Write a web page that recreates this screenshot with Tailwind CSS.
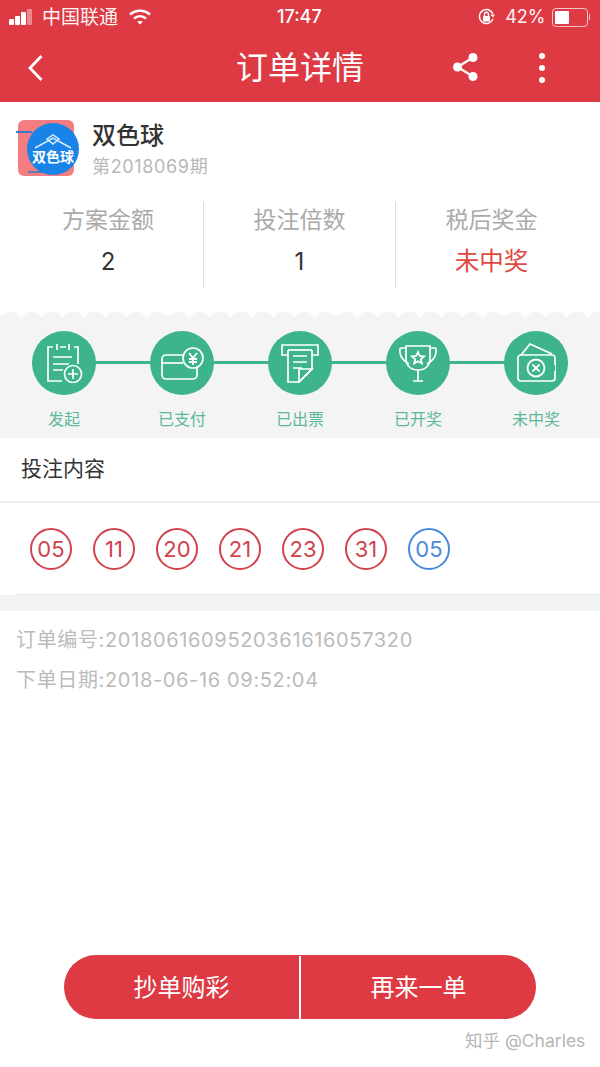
<!DOCTYPE html>
<html lang="zh-CN">
<head>
<meta charset="utf-8">
<script src="https://cdn.jsdelivr.net/npm/@tailwindcss/browser@4"></script>
</head>
<body class="m-0 bg-white">
<div class="relative flex h-[1067px] w-[600px] flex-col overflow-hidden bg-white font-['Inter','Noto_Sans_CJK_SC',sans-serif]">
  <!-- status bar + nav -->
  <header class="h-[102px] shrink-0 bg-[#dd3a44] text-white">
    <div class="flex h-[34px] items-center justify-between pl-[9px] pr-[10px]">
      <div class="flex items-center">
        <div class="flex items-end gap-[1px]">
          <span class="h-[6px] w-[5px] rounded-[1px] bg-white"></span>
          <span class="h-[9px] w-[5px] rounded-[1px] bg-white"></span>
          <span class="h-[13px] w-[5px] rounded-[1px] bg-white"></span>
          <span class="h-[16px] w-[5px] rounded-[1px] bg-white/40"></span>
        </div>
        <span class="ml-[10px] text-[19px] leading-none font-normal opacity-95">中国联通</span>
        <svg class="ml-[10px]" width="24" height="18" viewBox="0 0 24 18" fill="none" stroke="white" stroke-width="2.600"><path d="M2 6.500c6-5 14-5 20 0"/><path d="M6 10.500c3.600-3 8.400-3 12 0"/><path d="M12 16.500l-2.800-2.700c1.700-1.200 3.900-1.200 5.600 0z" fill="white" stroke="none"/></svg>
      </div>
      <span class="absolute left-[277px] text-[18px] font-medium leading-none">17:47</span>
      <div class="flex items-center">
        <svg width="19" height="18" viewBox="0 0 18 18" fill="none" stroke="white" stroke-width="1.400"><path d="M15.500 11A7 7 0 1 1 15.500 6"/><path d="M16.800 6.500l-1.300 2-1.800-2" stroke-width="1.200"/><rect x="5.500" y="8" width="7" height="5.500" fill="white" stroke="none" rx="0.800"/><path d="M7 8V6.300a2 2 0 0 1 4 0V8"/></svg>
        <span class="ml-[9px] text-[18px] leading-none opacity-95">42%</span>
        <div class="ml-[6px] flex h-[19px] w-[36px] items-center rounded-[4px] border border-white/70 p-[2px]">
          <span class="h-[13px] w-[14px] rounded-[1px] bg-white"></span>
        </div>
        <span class="ml-[1px] h-[6px] w-[1.500px] bg-white/70"></span>
      </div>
    </div>
    <div class="relative flex h-[68px] items-center justify-center">
      <svg class="absolute left-[26px] top-[20px]" width="20" height="28" viewBox="0 0 20 28" fill="none" stroke="white" stroke-width="2.800"><path d="M15.500 2 4 14l11.500 12"/></svg>
      <h1 class="text-[32px] leading-none font-normal">订单详情</h1>
      <svg class="absolute left-[452px] top-[17px]" width="28" height="32" viewBox="0 0 28 32" fill="white"><circle cx="21" cy="6.500" r="4.500"/><circle cx="5.500" cy="16" r="4.500"/><circle cx="21" cy="25.500" r="4.500"/><path d="M21 6.500 5.500 16 21 25.500" fill="none" stroke="white" stroke-width="2.200"/></svg>
      <div class="absolute left-[539px] top-[19px] flex flex-col gap-[6px]">
        <span class="h-[6px] w-[6px] rounded-full bg-white"></span>
        <span class="h-[6px] w-[6px] rounded-full bg-white"></span>
        <span class="h-[6px] w-[6px] rounded-full bg-white"></span>
      </div>
    </div>
  </header>

  <!-- lottery title -->
  <section class="flex h-[100px] shrink-0 items-start pl-[18px] pt-[18px]">
    <div class="relative h-[56px] w-[56px] rounded-[6px] bg-[#f47d80]">
      <span class="absolute left-[-2px] top-[11px] h-[2px] w-[16px] bg-[#3b78c8]"></span>
      <span class="absolute bottom-[3px] left-[10px] h-[2px] w-[30px] bg-[#5c7bb0]"></span>
      <div class="absolute left-[9px] top-[3px] flex h-[52px] w-[52px] flex-col items-center justify-center overflow-hidden rounded-full bg-[#1a83e8]">
        <svg width="38" height="15" viewBox="0 0 38 15" fill="none" stroke="#d8ecff" stroke-width="1.500"><path d="M1 14 19 4l18 10"/><path d="M13 5l6-4 6 4-6 5z"/></svg>
        <span class="mt-[-1px] whitespace-nowrap text-[14px] leading-[17px] font-bold text-white">双色球</span>
      </div>
    </div>
    <div class="ml-[18px] flex flex-col">
      <span class="text-[24px] leading-[32px] font-medium text-[#333]">双色球</span>
      <span class="mt-[2px] text-[18px] leading-[26px] tracking-[0.65px] text-[#b8b8b8]">第2018069期</span>
    </div>
  </section>

  <!-- stats -->
  <section class="flex h-[86px] shrink-0 pl-[13px] pr-[13px]">
    <div class="flex w-[191px] flex-col items-center border-r border-[#ddd]">
      <span class="mt-[3px] text-[23px] leading-[30px] text-[#aaa]">方案金额</span>
      <span class="mt-[11px] text-[24px] leading-[32px] text-[#333]">2</span>
    </div>
    <div class="flex w-[192px] flex-col items-center border-r border-[#ddd]">
      <span class="mt-[3px] text-[23px] leading-[30px] text-[#aaa]">投注倍数</span>
      <span class="mt-[11px] text-[24px] leading-[32px] text-[#333]">1</span>
    </div>
    <div class="flex w-[191px] flex-col items-center">
      <span class="mt-[3px] text-[23px] leading-[30px] text-[#aaa]">税后奖金</span>
      <span class="mt-[10px] text-[24.500px] leading-[32px] text-[#e0493f]">未中奖</span>
    </div>
  </section>

  <!-- progress -->
  <svg class="mt-[24px] shrink-0" width="600" height="6" viewBox="0 0 600 6"><defs><pattern id="scallop" width="21" height="6" patternUnits="userSpaceOnUse"><path d="M0 6C2 2 5 0 10.500 0S19 2 21 6z" fill="#f4f4f5"/></pattern></defs><rect width="600" height="6" fill="url(#scallop)"/></svg>
  <section class="relative h-[120px] shrink-0 bg-[#f4f4f5]">
    <div class="absolute left-[64px] right-[64px] top-[43px] h-[3px] bg-[#3db38e]"></div>
    <div class="relative flex justify-between pl-[32px] pr-[32px] pt-[13px]">
      <div class="flex w-[64px] flex-col items-center">
        <div class="flex h-[64px] w-[64px] items-center justify-center rounded-full bg-[#3db38e]">
          <svg width="40" height="40" viewBox="0 0 40 40" fill="none" stroke="white" stroke-width="1.700"><path d="M9 4H4v34h14M30 4h4v17"/><path d="M13 1v6M25 1v6M16 4h6M9 14H28M9 21H25M9 27H19"/><circle cx="29" cy="31" r="8.500"/><path d="M29 26v10M24 31h10"/></svg>
        </div>
        <span class="mt-[13px] whitespace-nowrap text-[16px] leading-[22px] text-[#5cb899]">发起</span>
      </div>
      <div class="flex w-[64px] flex-col items-center">
        <div class="flex h-[64px] w-[64px] items-center justify-center rounded-full bg-[#3db38e]">
          <svg width="44" height="36" viewBox="0 0 44 36" fill="none" stroke="white" stroke-width="1.700"><path d="M23 10H6a4 4 0 0 0-4 4v16a4 4 0 0 0 4 4h27a4 4 0 0 0 4-4V23"/><path d="M2 18h21"/><circle cx="33" cy="13" r="10"/><path d="M29 8l4 5 4-5M33 13v7M29 14h8M29 17h8" stroke-width="1.800"/></svg>
        </div>
        <span class="mt-[13px] whitespace-nowrap text-[16px] leading-[22px] text-[#5cb899]">已支付</span>
      </div>
      <div class="flex w-[64px] flex-col items-center">
        <div class="flex h-[64px] w-[64px] items-center justify-center rounded-full bg-[#3db38e]">
          <svg width="40" height="40" viewBox="0 0 40 40" fill="none" stroke="white" stroke-width="1.700"><path d="M8 12H2V2h36v10h-6"/><path d="M8 7h24"/><path d="M8 7v32h11l13-13V7"/><path d="M13 13h14M13 19h14M13 25h9M19 39V26h13z"/></svg>
        </div>
        <span class="mt-[13px] whitespace-nowrap text-[16px] leading-[22px] text-[#5cb899]">已出票</span>
      </div>
      <div class="flex w-[64px] flex-col items-center">
        <div class="flex h-[64px] w-[64px] items-center justify-center rounded-full bg-[#3db38e]">
          <svg width="40" height="40" viewBox="0 0 40 40" fill="none" stroke="white" stroke-width="1.700"><path d="M8 3H32V15C32 23 27 27 20 27C13 27 8 23 8 15Z"/><path d="M8 5H3C1 5 2 11 3 13C4.500 17 8 19 11 21M32 5H37C39 5 38 11 37 13C35.500 17 32 19 29 21"/><path d="M20 27V38M15 38H25"/><path d="M20 9l1.800 4 4.200.4-3.200 2.800 1 4.200-3.800-2.200-3.800 2.200 1-4.200-3.200-2.800 4.200-.4z" stroke-width="1.800"/></svg>
        </div>
        <span class="mt-[13px] whitespace-nowrap text-[16px] leading-[22px] text-[#5cb899]">已开奖</span>
      </div>
      <div class="flex w-[64px] flex-col items-center">
        <div class="flex h-[64px] w-[64px] items-center justify-center rounded-full bg-[#3db38e]">
          <svg width="40" height="40" viewBox="0 0 40 40" fill="none" stroke="white" stroke-width="1.700"><path d="M6 11l8-10 22 10M10 6 5 12"/><path d="M39 22v-7a3 3 0 0 0-3-3H5a3 3 0 0 0-3 3v20a3 3 0 0 0 3 3h31a3 3 0 0 0 3-3v-7"/><path d="M39 22h1v6h-1"/><circle cx="20" cy="25" r="8.500" stroke-width="1.800"/><path d="M16.500 21.500l7 7M23.500 21.500l-7 7" stroke-width="1.800"/></svg>
        </div>
        <span class="mt-[13px] whitespace-nowrap text-[16px] leading-[22px] text-[#5cb899]">未中奖</span>
      </div>
    </div>
  </section>

  <!-- bet content -->
  <div class="flex h-[65px] shrink-0 items-center border-b-2 border-[#eee] pb-[1px] pl-[21px] text-[21px] text-[#333]">投注内容</div>
  <div class="ml-[16px] flex h-[92px] shrink-0 items-center gap-[21px] border-b border-[#e8e8e8] pt-[1px] pl-[14px]">
    <span class="flex h-[42px] w-[42px] items-center justify-center rounded-full border-2 border-[#d1424d] text-[22px] leading-none text-[#d1424d]">05</span>
    <span class="flex h-[42px] w-[42px] items-center justify-center rounded-full border-2 border-[#d1424d] text-[22px] leading-none text-[#d1424d]">11</span>
    <span class="flex h-[42px] w-[42px] items-center justify-center rounded-full border-2 border-[#d1424d] text-[22px] leading-none text-[#d1424d]">20</span>
    <span class="flex h-[42px] w-[42px] items-center justify-center rounded-full border-2 border-[#d1424d] text-[22px] leading-none text-[#d1424d]">21</span>
    <span class="flex h-[42px] w-[42px] items-center justify-center rounded-full border-2 border-[#d1424d] text-[22px] leading-none text-[#d1424d]">23</span>
    <span class="flex h-[42px] w-[42px] items-center justify-center rounded-full border-2 border-[#d1424d] text-[22px] leading-none text-[#d1424d]">31</span>
    <span class="flex h-[42px] w-[42px] items-center justify-center rounded-full border-2 border-[#4a88e0] text-[22px] leading-none text-[#4a88e0]">05</span>
  </div>
  <div class="h-[16px] shrink-0 bg-[#f2f3f5]"></div>

  <!-- order meta -->
  <div class="flex shrink-0 flex-col gap-[10px] pl-[16px] pt-[14px] text-[20px] leading-[30px] tracking-[0.65px] text-[#bbb]">
    <p>订单编号:2018061609520361616057320</p>
    <p>下单日期:2018-06-16 09:52:04</p>
  </div>

  <!-- actions -->
  <div class="mt-auto mb-[48px] ml-[64px] flex h-[64px] w-[472px] shrink-0 overflow-hidden rounded-full bg-[#dd3a44] pt-[1px] text-[24px] text-white">
    <button class="w-[237px] border-r-2 border-white">抄单购彩</button>
    <button class="flex-1">再来一单</button>
  </div>
  <span class="absolute left-[465px] top-[1028px] text-[17.500px] leading-[26px] whitespace-nowrap text-[#b5b5b5]">知乎 @Charles</span>
</div>
</body>
</html>
